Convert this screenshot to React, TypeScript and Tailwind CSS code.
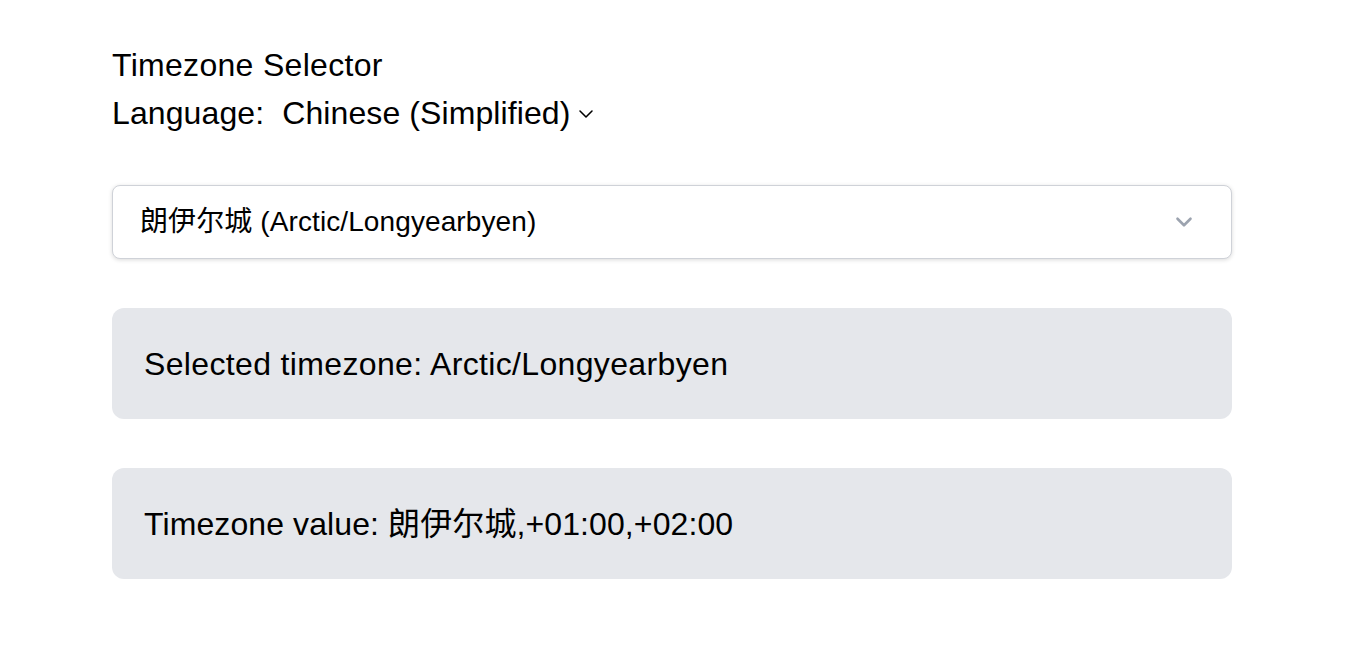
import React, { useState } from 'react';

const zones = [
  { id: 'Arctic/Longyearbyen', label: '朗伊尔城', offsets: '+01:00,+02:00' },
];

const Chevron = ({ className, sw = 2 }: { className?: string; sw?: number }) => (
  <svg viewBox="0 0 20 20" fill="none" stroke="currentColor" strokeWidth={sw} strokeLinecap="round" strokeLinejoin="round" className={className}>
    <path d="M5 7.5l5 5 5-5" />
  </svg>
);

export default function App() {
  const [zone] = useState(zones[0]);

  return (
    <div
      className="min-h-screen bg-white text-black px-[112px] pt-[41px]"
      style={{ fontFamily: '"Liberation Sans", "Noto Sans CJK SC", sans-serif' }}
    >
      <div className="w-[1120px]">
        {/* HEADER */}
        <h1 className="text-[32px] leading-[48px] font-normal tracking-[0.3px]">Timezone Selector</h1>
        <div className="flex items-center text-[32px] leading-[48px] tracking-[0.1px]">
          <span>Language:</span>
          <span className="ml-[18px]">Chinese (Simplified)</span>
          <Chevron sw={1.3} className="w-[24px] h-[24px] ml-[3px] mt-[2px] text-black" />
        </div>

        {/* TIMEZONE SELECT */}
        <div className="mt-[48px] h-[74px] flex items-center justify-between px-[27px] bg-white border border-[#cfd2d8] rounded-[8px] shadow-[0_1px_4px_rgba(0,0,0,0.15)]">
          <span className="text-[28px] leading-[36px] tracking-[0.1px]">
            {zone.label} ({zone.id})
          </span>
          <Chevron className="w-[26px] h-[26px] mr-[7px] text-[#9ca3af]" />
        </div>

        {/* INFO BOXES */}
        <div className="mt-[49px] bg-[#e5e7eb] rounded-[12px] pt-8 pb-[31px] px-8 text-[32px] leading-[48px] tracking-[0.35px]">
          Selected timezone: {zone.id}
        </div>
        <div className="mt-[49px] bg-[#e5e7eb] rounded-[12px] pt-8 pb-[31px] px-8 text-[32px] leading-[48px] tracking-[0.1px]">
          Timezone value: {zone.label},{zone.offsets}
        </div>
      </div>
    </div>
  );
}
